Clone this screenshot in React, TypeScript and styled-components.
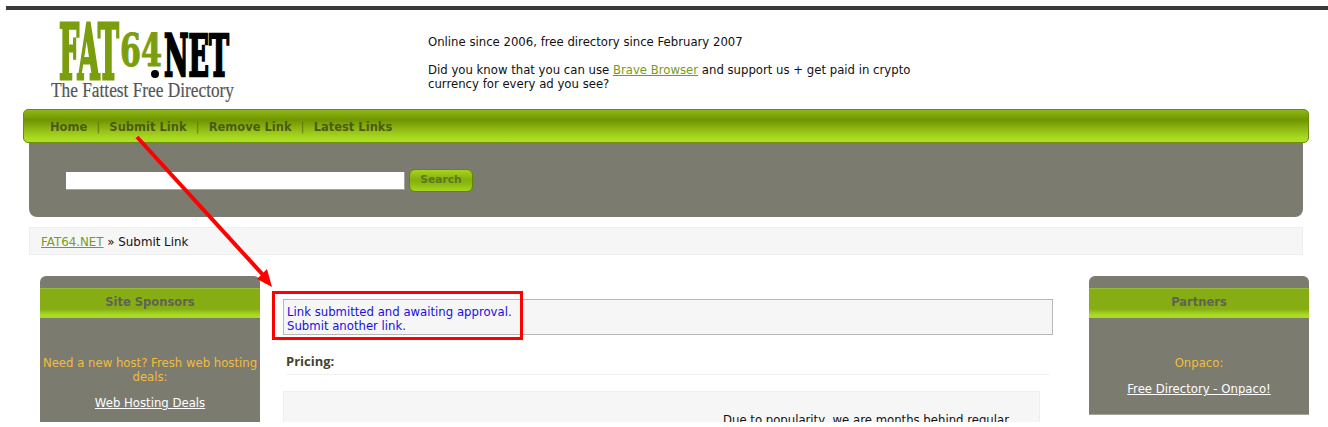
import React from 'react';
import styled, { createGlobalStyle } from 'styled-components';

const GlobalStyle = createGlobalStyle`
  html, body {
    margin: 0;
    padding: 0;
    background: #ffffff;
  }
`;

const Page = styled.div`
  position: relative;
  width: 1322px;
  height: 416px;
  margin: 6px 0 0 6px;
  overflow: hidden;
  font-family: "DejaVu Sans", Verdana, sans-serif;
  font-size: 11.7px;
  line-height: 14px;
  color: #111111;
`;

const TopBar = styled.div`
  height: 4px;
  background: #3a3a3a;
`;

const Header = styled.header`
  display: flex;
  height: 99px;
`;

const LogoWrap = styled.div`
  width: 422px;
  flex: none;
`;

const Intro = styled.div`
  width: 490px;
  padding-top: 25px;

  p {
    margin: 0 0 14px;
  }

  a {
    color: #7a9a1a;
  }
`;

const NavBar = styled.nav`
  display: flex;
  align-items: center;
  box-sizing: border-box;
  width: 1286px;
  height: 34px;
  margin-left: 17px;
  padding: 2px 0 0 26px;
  border: 1px solid #6a8f00;
  border-radius: 5px;
  background: linear-gradient(#8fb518 0, #7ca308 6px, #6f9400 10px, #8db412 18px, #aadb22 28px, #b0e024 100%);
  position: relative;
  z-index: 1;
  font-size: 11.5px;
`;

const NavLink = styled.a`
  font-weight: bold;
  color: #4b5c12;
  text-decoration: none;
`;

const NavSep = styled.span`
  margin: 0 9px;
  color: #5f7a14;
  font-size: 12px;
`;

const SearchPanel = styled.div`
  display: flex;
  align-items: center;
  box-sizing: border-box;
  width: 1274px;
  height: 74px;
  margin-left: 23px;
  padding: 0 0 0 37px;
  background: #7b7b70;
  border-radius: 0 0 8px 8px;
`;

const SearchInput = styled.input`
  box-sizing: border-box;
  width: 339px;
  height: 18px;
  margin: 2px 4px 0 0;
  padding: 0;
  background: #ffffff;
  border: none;
  border-bottom: 1px solid #a5a59c;
  border-right: 1px solid #a5a59c;
`;

const SearchButton = styled.button`
  box-sizing: border-box;
  width: 64px;
  height: 23px;
  padding: 0 0 2px;
  border: 1px solid #5f8a00;
  border-radius: 6px;
  background: linear-gradient(#a6d41e 0, #86b00e 45%, #8cb810 65%, #a4d81c 100%);
  font-family: "DejaVu Sans", Verdana, sans-serif;
  font-size: 10.7px;
  font-weight: bold;
  color: #5f7622;
`;

const Crumbs = styled.div`
  box-sizing: border-box;
  width: 1274px;
  height: 28px;
  margin: 10px 0 0 23px;
  padding: 7px 0 0 11px;
  background: #f6f6f6;
  border: 1px solid #eeeeee;
  font-size: 11.85px;

  a {
    color: #7a9a1a;
  }
`;

const Columns = styled.div`
  display: flex;
  align-items: flex-start;
  margin: 21px 0 0 34px;
`;

const Sidebar = styled.aside<{ $right?: boolean }>`
  flex: none;
  box-sizing: border-box;
  width: 220px;
  background: #7b7b70;
  border-radius: 6px 6px 0 0;
  padding-top: 12px;
  text-align: center;
  ${p => p.$right ? `
    height: 139px;
    margin-left: 36px;
    border-bottom: 1px solid #a5a59c;
  ` : `
    height: 160px;
  `}
`;

const SideTitle = styled.h3`
  box-sizing: border-box;
  height: 30px;
  margin: 0;
  padding-top: 6px;
  border-top: 1px solid #9ab83a;
  background: linear-gradient(#86ad14 0, #86ad14 20px, #a9dc22 26px, #a9dc22 100%);
  font-size: 11.5px;
  line-height: 14px;
  font-weight: bold;
  color: #5d6452;
`;

const SideText = styled.p`
  margin: 38px 0 0;
  color: #f2bd3c;
`;

const SideLink = styled.a<{ $gap: number }>`
  display: block;
  margin-top: ${p => p.$gap}px;
  color: #ffffff;
  text-decoration: underline;
`;

const Center = styled.main`
  flex: none;
  width: 770px;
  margin-left: 23px;
  padding-top: 23px;
`;

const Message = styled.div`
  box-sizing: border-box;
  height: 36px;
  padding: 5px 3px 0;
  background: #f6f6f6;
  border: 1px solid #b8b8b8;
  color: #1a10e0;
`;

const SectionTitle = styled.h2`
  box-sizing: border-box;
  width: 764px;
  height: 21px;
  margin: 19px 0 0 3px;
  border-bottom: 1px solid #f3eef0;
  font-family: "Open Sans", sans-serif;
  font-size: 13px;
  line-height: 14px;
  font-weight: bold;
  color: #44442f;
`;

const PriceBox = styled.div`
  box-sizing: border-box;
  width: 757px;
  height: 60px;
  margin-top: 16px;
  padding: 21px 0 0 439px;
  background: #f6f6f6;
  border: 1px solid #eeeeee;
`;

const Callout = styled.div`
  position: absolute;
  left: 266px;
  top: 285px;
  box-sizing: border-box;
  width: 251px;
  height: 49px;
  border: 3px solid #ff0000;
  pointer-events: none;
`;

const ArrowLayer = styled.svg`
  position: absolute;
  left: 0;
  top: 0;
  z-index: 2;
  pointer-events: none;
`;

const Logo = () => (
  <svg width="240" height="99" viewBox="0 0 240 99">
    <g fontFamily='"DejaVu Serif Condensed", "DejaVu Serif", serif' fontWeight="bold">
      <text x="53" y="69" fontSize="76" textLength="60" lengthAdjust="spacingAndGlyphs" fill="#7a9e0e" stroke="#7a9e0e" strokeWidth="3">FAT</text>
      <text x="114" y="56" fontSize="45" textLength="42" lengthAdjust="spacingAndGlyphs" fill="#7a9e0e" stroke="#7a9e0e" strokeWidth="1">64</text>
      <circle cx="149" cy="64" r="4" fill="#000000" />
      <text x="158" y="66" fontSize="58" textLength="65" lengthAdjust="spacingAndGlyphs" fill="#000000" stroke="#000000" strokeWidth="2.4">NET</text>
    </g>
    <text x="45" y="87" fontFamily='"Liberation Serif", serif' fontSize="20" textLength="183" lengthAdjust="spacingAndGlyphs" fill="#555555" stroke="#555555" strokeWidth="0.2">The Fattest Free Directory</text>
  </svg>
);

const App: React.FC = () => {
  return (
    <>
      <GlobalStyle />
      <Page>
        <TopBar />
        <Header>
          <LogoWrap>
            <Logo />
          </LogoWrap>
          <Intro>
            <p>Online since 2006, free directory since February 2007</p>
            <p>
              Did you know that you can use <a href="#brave">Brave Browser</a> and support us + get paid in crypto
              currency for every ad you see?
            </p>
          </Intro>
        </Header>
        <NavBar>
          <NavLink href="#home">Home</NavLink>
          <NavSep>|</NavSep>
          <NavLink href="#submit">Submit Link</NavLink>
          <NavSep>|</NavSep>
          <NavLink href="#remove">Remove Link</NavLink>
          <NavSep>|</NavSep>
          <NavLink href="#latest">Latest Links</NavLink>
        </NavBar>
        <SearchPanel>
          <SearchInput type="text" />
          <SearchButton>Search</SearchButton>
        </SearchPanel>
        <Crumbs>
          <a href="#root">FAT64.NET</a> » Submit Link
        </Crumbs>
        <Columns>
          <Sidebar>
            <SideTitle>Site Sponsors</SideTitle>
            <SideText>Need a new host? Fresh web hosting deals:</SideText>
            <SideLink href="#hosting" $gap={12}>Web Hosting Deals</SideLink>
          </Sidebar>
          <Center>
            <Message>
              Link submitted and awaiting approval.
              <br />
              Submit another link.
            </Message>
            <SectionTitle>Pricing:</SectionTitle>
            <PriceBox>Due to popularity, we are months behind regular</PriceBox>
          </Center>
          <Sidebar $right>
            <SideTitle>Partners</SideTitle>
            <SideText>Onpaco:</SideText>
            <SideLink href="#onpaco" $gap={12}>Free Directory - Onpaco!</SideLink>
          </Sidebar>
        </Columns>
        <Callout />
        <ArrowLayer width="1322" height="416" viewBox="0 0 1322 416">
          <line x1="131" y1="131" x2="258" y2="270" stroke="#ff0000" strokeWidth="4" />
          <polygon points="266,281 251,273 261,263" fill="#ff0000" />
        </ArrowLayer>
      </Page>
    </>
  );
};

export default App;
